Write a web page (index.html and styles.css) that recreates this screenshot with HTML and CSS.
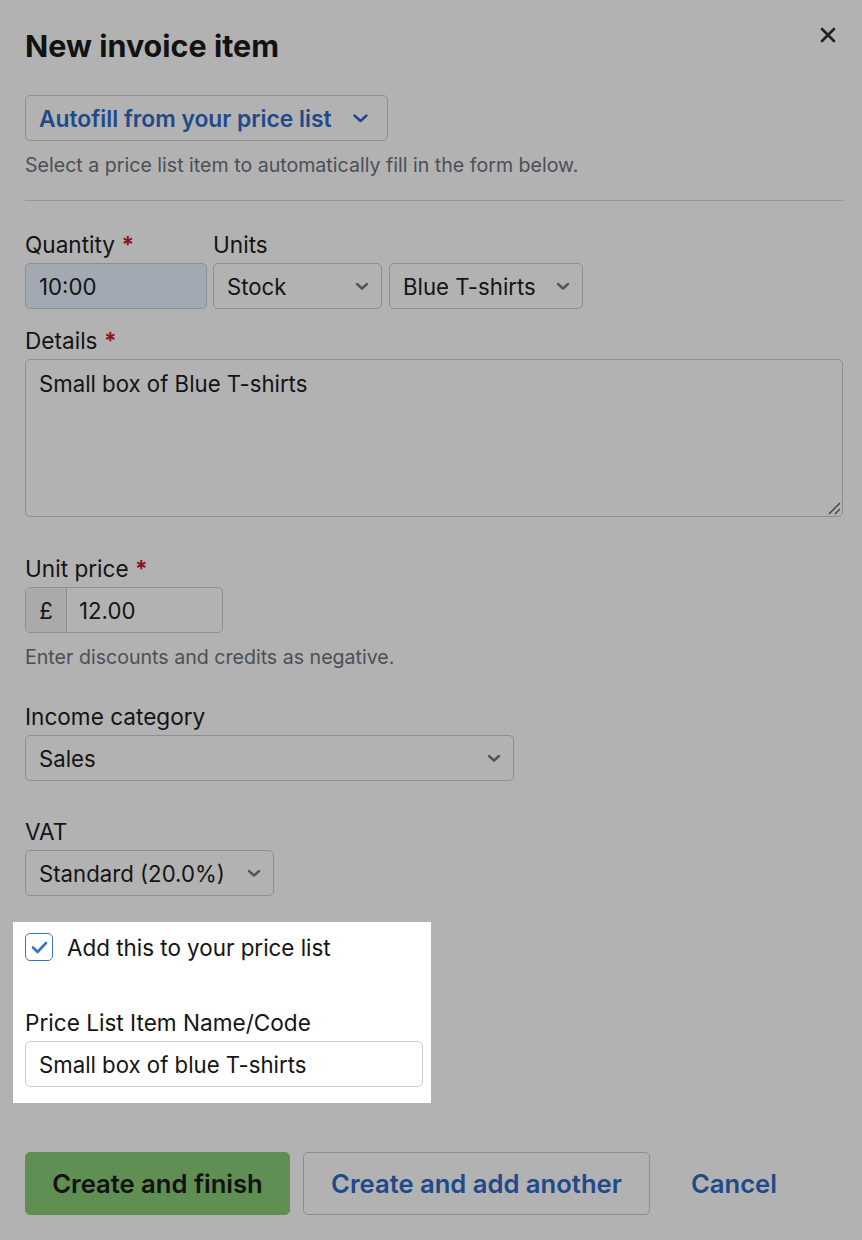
FILE: index.html
```html
<!DOCTYPE html>
<html lang="en">
<head>
  <meta charset="utf-8">
  <title>New invoice item</title>
  <link rel="stylesheet" href="styles.css">
</head>
<body>
<div class="modal">
  <header class="modal-head">
    <h1 class="modal-title">New invoice item</h1>
    <button class="close" type="button" aria-label="Close">
      <svg width="16" height="16" viewBox="0 0 16 16"><path d="M2 2L14 14M14 2L2 14" stroke="#1f2326" stroke-width="2.6" stroke-linecap="round"/></svg>
    </button>
  </header>

  <button class="autofill-btn" type="button">
    Autofill from your price list
    <svg width="15" height="9" viewBox="0 0 15 9"><path d="M1.5 1.5L7.5 7L13.5 1.5" fill="none" stroke="#1f4a8a" stroke-width="2.4" stroke-linecap="round" stroke-linejoin="round"/></svg>
  </button>
  <p class="hint">Select a price list item to automatically fill in the form below.</p>

  <hr class="divider">

  <div class="qty-row">
    <div class="field">
      <label class="label">Quantity <span class="req">*</span></label>
      <div class="input input-filled">10:00</div>
    </div>
    <div class="field">
      <label class="label">Units</label>
      <div class="units">
        <div class="input select select-units">Stock <svg class="chev" width="14" height="9" viewBox="0 0 14 9"><path d="M2 2L7 6.5L12 2" fill="none" stroke="#50565c" stroke-width="2.4" stroke-linecap="round" stroke-linejoin="round"/></svg></div>
        <div class="input select select-kind">Blue T-shirts <svg class="chev" width="14" height="9" viewBox="0 0 14 9"><path d="M2 2L7 6.5L12 2" fill="none" stroke="#50565c" stroke-width="2.4" stroke-linecap="round" stroke-linejoin="round"/></svg></div>
      </div>
    </div>
  </div>

  <div class="field field-details">
    <label class="label">Details <span class="req">*</span></label>
    <div class="textarea">Small box of Blue T-shirts
      <svg class="grip" width="14" height="14" viewBox="0 0 14 14"><path d="M2 13L13 2M8 13L13 8" stroke="#3f3f3f" stroke-width="1.4"/></svg>
    </div>
  </div>

  <div class="field field-price">
    <label class="label">Unit price <span class="req">*</span></label>
    <div class="input-group">
      <span class="prefix">£</span>
      <span class="group-value">12.00</span>
    </div>
    <p class="hint hint-price">Enter discounts and credits as negative.</p>
  </div>

  <div class="field field-income">
    <label class="label">Income category</label>
    <div class="input select select-income">Sales <svg class="chev" width="14" height="9" viewBox="0 0 14 9"><path d="M2 2L7 6.5L12 2" fill="none" stroke="#50565c" stroke-width="2.4" stroke-linecap="round" stroke-linejoin="round"/></svg></div>
  </div>

  <div class="field field-vat">
    <label class="label">VAT</label>
    <div class="input select select-vat">Standard (20.0%) <svg class="chev" width="14" height="9" viewBox="0 0 14 9"><path d="M2 2L7 6.5L12 2" fill="none" stroke="#50565c" stroke-width="2.4" stroke-linecap="round" stroke-linejoin="round"/></svg></div>
  </div>

  <div class="spotlight">
    <label class="check-row">
      <span class="checkbox">
        <svg width="17" height="13" viewBox="0 0 17 13"><path d="M2 6.5L6.5 11L15 2" fill="none" stroke="#3476c6" stroke-width="2.6" stroke-linecap="round" stroke-linejoin="round"/></svg>
      </span>
      Add this to your price list
    </label>
    <label class="label label-code">Price List Item Name/Code</label>
    <div class="input input-white">Small box of blue T-shirts</div>
  </div>

  <div class="actions">
    <button class="btn btn-primary" type="button">Create and finish</button>
    <button class="btn btn-secondary" type="button">Create and add another</button>
    <button class="btn btn-link" type="button">Cancel</button>
  </div>
</div>
</body>
</html>
```

FILE: styles.css
```css
body {
  margin: 0;
  background-color: #b2b2b2;
  font-family: Inter, "Noto Sans", sans-serif;
  color: #141414;
}

.modal {
  padding: 0 19px 40px 25px;
}

.modal-head {
  display: flex;
  justify-content: space-between;
  align-items: flex-start;
  padding-top: 29px;
}

.modal-title {
  margin: 0;
  font-size: 30.5px;
  line-height: 34px;
  font-weight: 700;
  color: #121212;
}

.close {
  border: 0;
  background: none;
  padding: 0;
  margin: -2px 7px 0 0;
  line-height: 0;
}

.autofill-btn {
  display: flex;
  align-items: center;
  gap: 21px;
  margin-top: 32px;
  height: 46px;
  padding: 0 19px 0 13px;
  border: 1px solid #8c8f92;
  border-radius: 5px;
  background: transparent;
  font-family: inherit;
  font-size: 22.8px;
  font-weight: 600;
  color: #1f4a8a;
}

.hint {
  margin: 13px 0 0;
  font-size: 19.6px;
  line-height: 22px;
  color: #4b5057;
}

.divider {
  margin: 24px 0 0;
  border: 0;
  border-top: 1px solid #979797;
}

.label {
  display: block;
  font-size: 22.6px;
  line-height: 24px;
  margin-bottom: 6px;
  color: #141414;
}

.req {
  color: #8a1515;
  font-weight: 700;
}

.qty-row {
  display: flex;
  gap: 6px;
  margin-top: 32px;
}

.units {
  display: flex;
  gap: 7px;
}

.input {
  box-sizing: border-box;
  height: 46px;
  display: flex;
  align-items: center;
  padding: 0 13px;
  border: 1px solid #8c8f92;
  border-radius: 5px;
  font-size: 22.2px;
}

.input-filled {
  width: 182px;
  background-color: #a3a9b3;
}

.select {
  justify-content: space-between;
  padding-right: 12px;
}

.select-units {
  width: 169px;
}

.select-kind {
  width: 194px;
}

.field-details {
  margin-top: 20px;
}

.textarea {
  position: relative;
  box-sizing: border-box;
  height: 158px;
  padding: 11px 13px;
  border: 1px solid #8c8f92;
  border-radius: 5px;
  font-size: 22.2px;
  line-height: 26px;
}

.grip {
  position: absolute;
  right: 1px;
  bottom: 1px;
}

.field-price {
  margin-top: 40px;
}

.input-group {
  box-sizing: border-box;
  width: 198px;
  height: 46px;
  display: flex;
  border: 1px solid #8c8f92;
  border-radius: 5px;
  overflow: hidden;
  font-size: 22.2px;
}

.prefix {
  width: 40px;
  display: flex;
  align-items: center;
  justify-content: center;
  background-color: #aaaaaa;
  border-right: 1px solid #8c8f92;
}

.group-value {
  display: flex;
  align-items: center;
  padding-left: 12px;
}

.hint-price {
  margin-top: 13px;
}

.field-income {
  margin-top: 37px;
}

.select-income {
  width: 489px;
}

.field-vat {
  margin-top: 39px;
}

.select-vat {
  width: 249px;
}

.spotlight {
  width: 418px;
  box-sizing: border-box;
  margin: 26px 0 0 -12px;
  padding: 11px 8px 16px 12px;
  background-color: #ffffff;
}

.check-row {
  display: flex;
  align-items: center;
  gap: 14px;
  font-size: 22.4px;
  line-height: 27px;
}

.checkbox {
  box-sizing: border-box;
  width: 28px;
  height: 28px;
  display: flex;
  align-items: center;
  justify-content: center;
  border: 1.5px solid #3476c6;
  border-radius: 5px;
}

.label-code {
  margin-top: 50px;
}

.input-white {
  border-color: #c8ccd0;
}

.actions {
  display: flex;
  align-items: center;
  gap: 13px;
  margin-top: 49px;
}

.btn {
  height: 63px;
  box-sizing: border-box;
  border-radius: 5px;
  font-family: inherit;
  font-size: 25.6px;
  font-weight: 600;
  padding: 0 20px;
}

.btn-primary {
  width: 265px;
  background-color: #5f8f52;
  border: 1px solid #5f8f52;
  color: #121212;
}

.btn-secondary {
  width: 347px;
  background: transparent;
  border: 1px solid #8a8c8f;
  color: #1f4a8a;
}

.btn-link {
  background: transparent;
  border: 0;
  color: #1f4a8a;
  padding: 0 21px 0 28px;
}
```
